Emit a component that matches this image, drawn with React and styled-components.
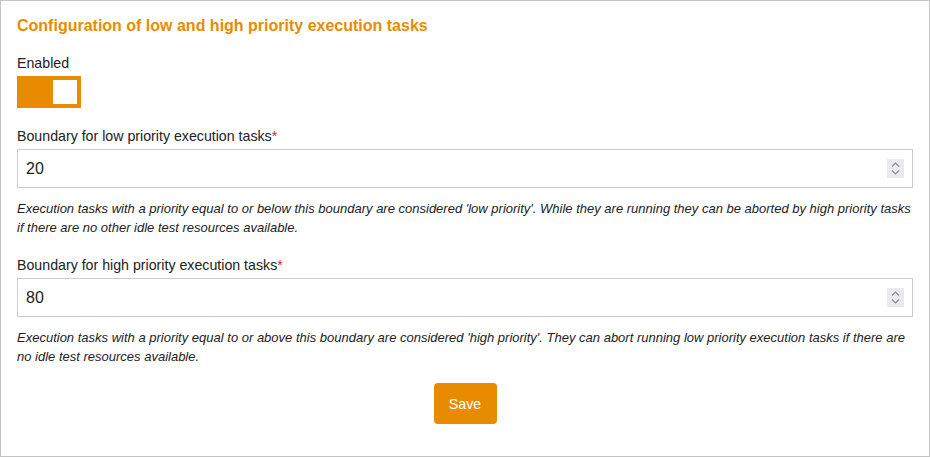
import React, { useState } from "react";
import styled, { createGlobalStyle } from "styled-components";

const GlobalStyle = createGlobalStyle`
  html, body {
    margin: 0;
    padding: 0;
    background: #ffffff;
  }
  body {
    font-family: "Liberation Sans", Arial, sans-serif;
    color: #222222;
  }
  * {
    box-sizing: border-box;
  }
`;

const ORANGE = "#e88b00";

const Panel = styled.div`
  width: 930px;
  height: 457px;
  border: 1px solid #c4c4c4;
  padding: 15px 16px 0 16px;
  display: flex;
  flex-direction: column;
`;

const Title = styled.h2`
  margin: 0;
  font-size: 16px;
  line-height: 20px;
  font-weight: bold;
  color: ${ORANGE};
`;

const Label = styled.label`
  display: block;
  font-size: 14.2px;
  line-height: 20px;
  margin-top: ${(p) => p.$top}px;
`;

const Required = styled.span`
  color: #e0182d;
`;

const Toggle = styled.button`
  margin-top: 3px;
  width: 64px;
  height: 32px;
  padding: 4px;
  border: none;
  background: ${(p) => (p.$on ? ORANGE : "#bdbdbd")};
  display: flex;
  justify-content: ${(p) => (p.$on ? "flex-end" : "flex-start")};
  cursor: pointer;
`;

const Knob = styled.span`
  width: 24px;
  height: 24px;
  background: #ffffff;
`;

const InputBox = styled.div`
  margin-top: 3px;
  height: 39px;
  border: 1px solid #cccccc;
  display: flex;
  align-items: center;
  padding: 0 8px 0 8px;
`;

const NumberInput = styled.input`
  flex: 1;
  border: none;
  outline: none;
  font-family: "Liberation Sans", Arial, sans-serif;
  font-size: 16px;
  color: #222222;
  padding: 0;
  background: transparent;
`;

const Spinner = styled.span`
  width: 17px;
  height: 19px;
  background: #e9e9ee;
  display: flex;
  align-items: center;
  justify-content: center;
`;

const Help = styled.p`
  margin: 11px 0 0 0;
  font-size: 13px;
  line-height: 19px;
  font-style: italic;
  color: #222222;
`;

const Actions = styled.div`
  display: flex;
  justify-content: center;
  margin-top: 17px;
`;

const SaveButton = styled.button`
  width: 63px;
  height: 41px;
  border: none;
  border-radius: 4px;
  background: ${ORANGE};
  color: #ffffff;
  font-family: "Liberation Sans", Arial, sans-serif;
  font-size: 14.2px;
  cursor: pointer;
`;

const SpinIcon = () => (
  <svg width="11" height="15" viewBox="0 0 11 15" fill="none" stroke="#8a8a95" strokeWidth="1.2">
    <path d="M2 5.5 L5.5 2 L9 5.5" />
    <path d="M2 9.5 L5.5 13 L9 9.5" />
  </svg>
);

const NumberField = ({ value, onChange }) => (
  <InputBox>
    <NumberInput value={value} onChange={(e) => onChange(e.target.value)} />
    <Spinner>
      <SpinIcon />
    </Spinner>
  </InputBox>
);

const App = () => {
  const [enabled, setEnabled] = useState(true);
  const [low, setLow] = useState("20");
  const [high, setHigh] = useState("80");

  return (
    <>
      <GlobalStyle />
      <Panel>
        <Title>Configuration of low and high priority execution tasks</Title>

        <Label $top={17}>Enabled</Label>
        <Toggle $on={enabled} onClick={() => setEnabled(!enabled)}>
          <Knob />
        </Toggle>

        <Label $top={18}>
          Boundary for low priority execution tasks<Required>*</Required>
        </Label>
        <NumberField value={low} onChange={setLow} />
        <Help>
          Execution tasks with a priority equal to or below this boundary are considered 'low priority'. While they are
          running they can be aborted by high priority tasks if there are no other idle test resources available.
        </Help>

        <Label $top={18}>
          Boundary for high priority execution tasks<Required>*</Required>
        </Label>
        <NumberField value={high} onChange={setHigh} />
        <Help>
          Execution tasks with a priority equal to or above this boundary are considered 'high priority'. They can abort
          running low priority execution tasks if there are no idle test resources available.
        </Help>

        <Actions>
          <SaveButton>Save</SaveButton>
        </Actions>
      </Panel>
    </>
  );
};

export default App;
